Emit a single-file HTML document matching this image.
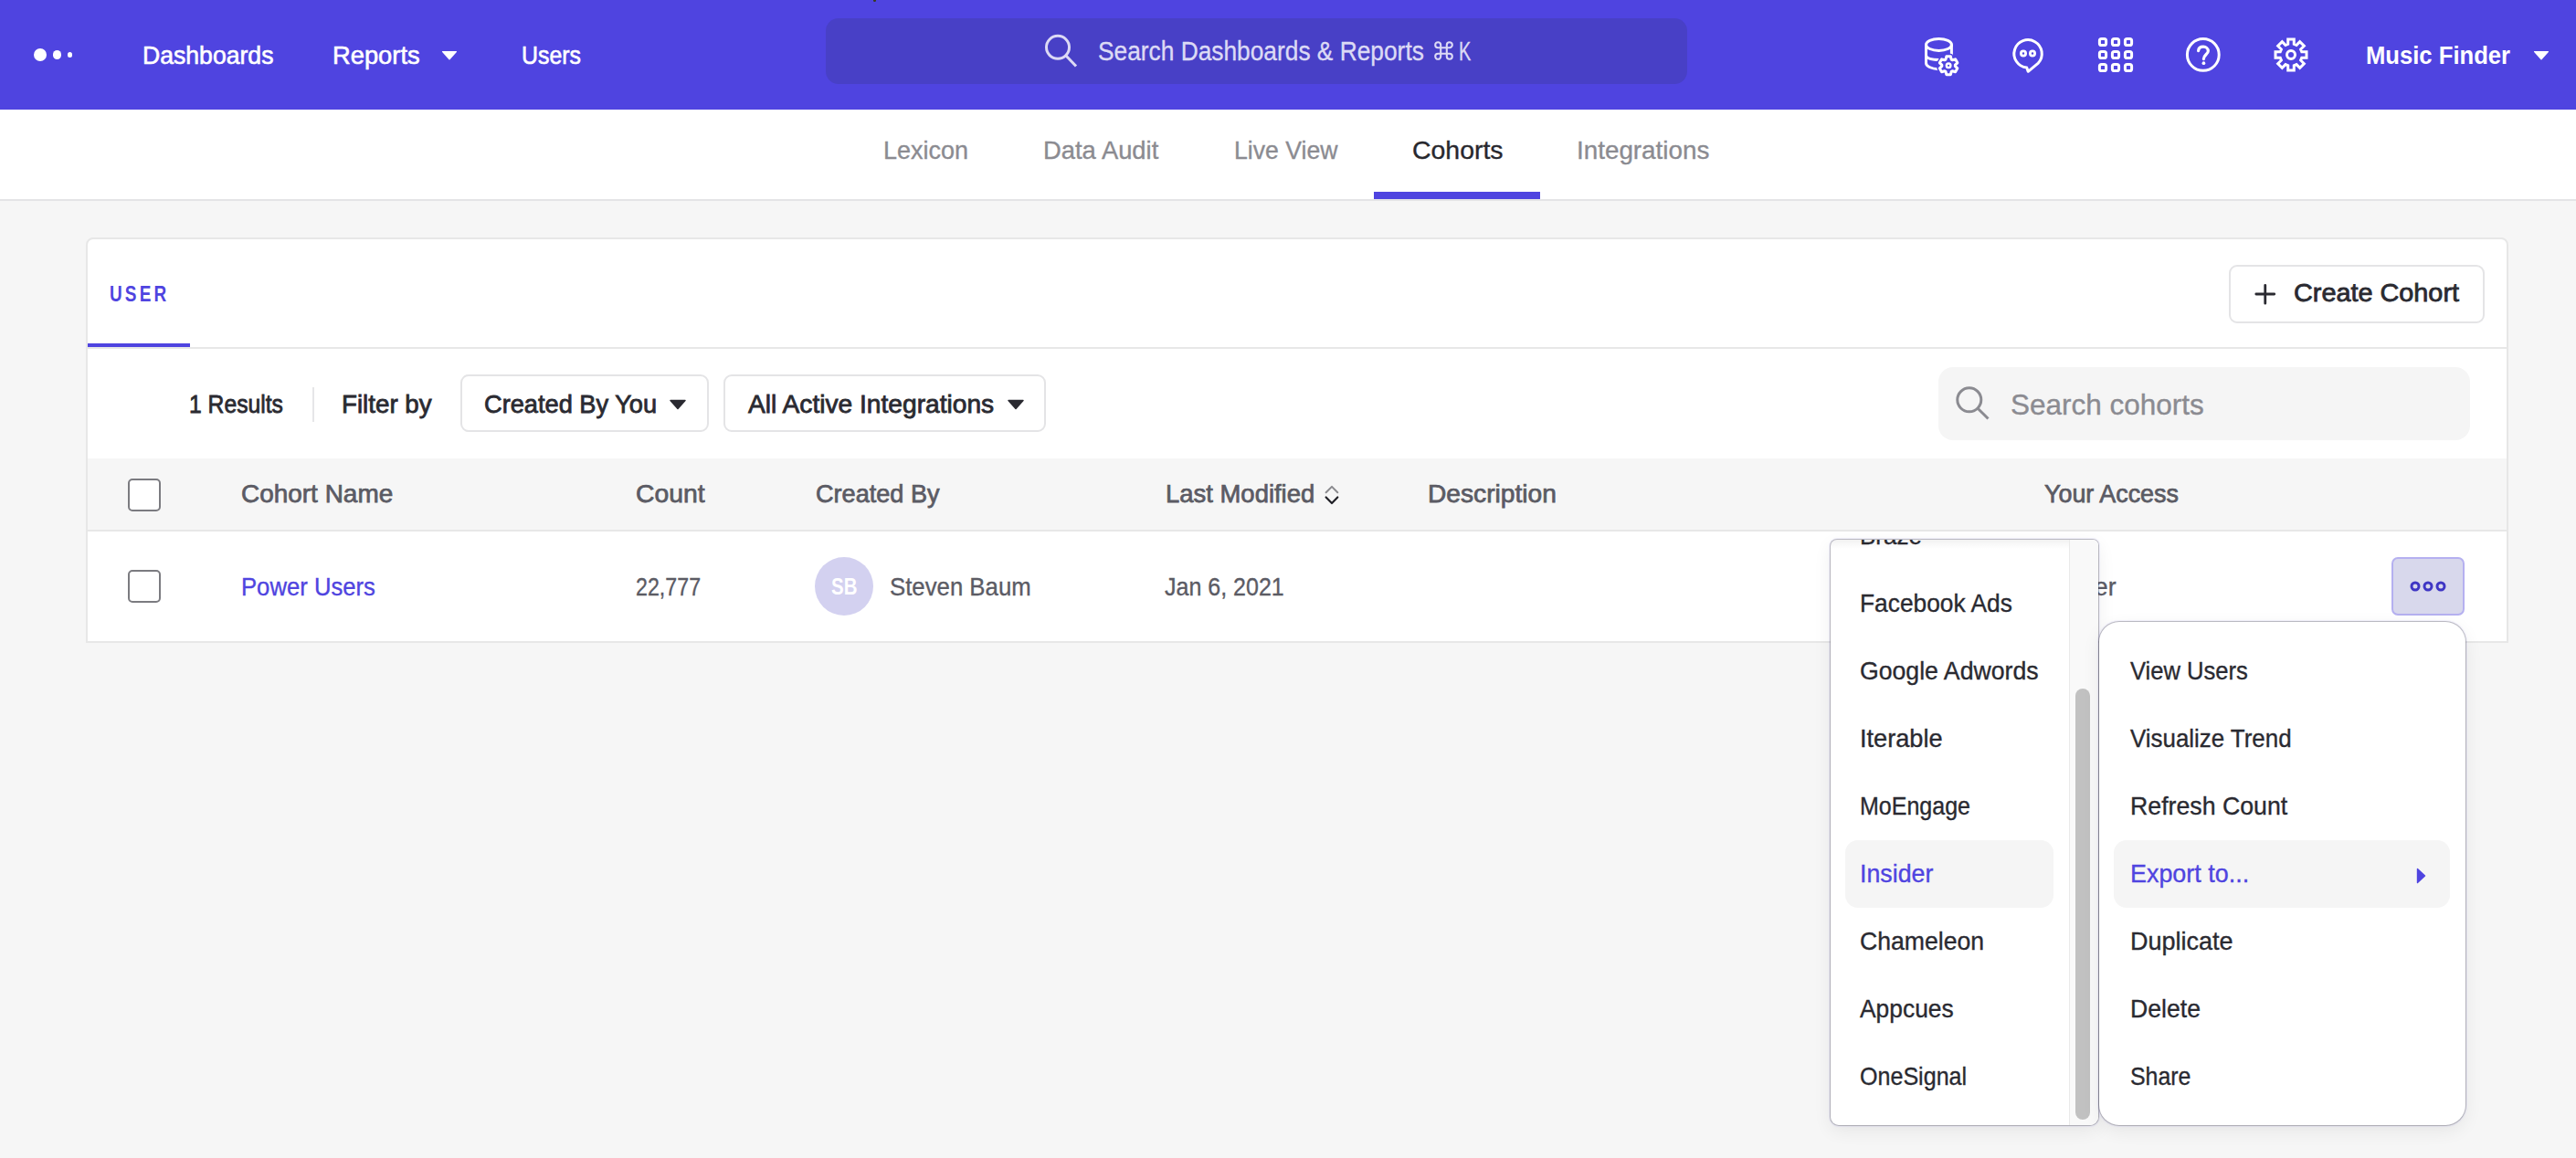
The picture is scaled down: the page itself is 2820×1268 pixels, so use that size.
<!DOCTYPE html>
<html><head><meta charset="utf-8"><style>
html,body{margin:0;padding:0;width:2820px;height:1268px;overflow:hidden;background:#f6f6f6;font-family:"Liberation Sans",sans-serif;}
.abs{position:absolute;box-sizing:content-box}
.t{position:absolute;white-space:nowrap;transform-origin:0 0}
.dot{position:absolute;border-radius:50%;background:#fff}
</style></head><body>
<div class="abs" style="left:0;top:0;width:2820px;height:120px;background:#4f44e0"></div>
<div class="abs" style="left:956px;top:0;width:3px;height:1.5px;border-radius:0 0 2px 2px;background:#3a3a20"></div>
<div class="dot" style="left:37.3px;top:53px;width:14px;height:14px"></div>
<div class="dot" style="left:57.8px;top:55.3px;width:9.4px;height:9.4px"></div>
<div class="dot" style="left:73.7px;top:57.4px;width:5.2px;height:5.2px"></div>
<div class="t" style="left:155.50px;top:47px;font-size:28px;line-height:28px;color:#ffffff;font-weight:400;-webkit-text-stroke:0.6px #ffffff;transform:scaleX(0.9503);">Dashboards</div>
<div class="t" style="left:364.40px;top:47px;font-size:28px;line-height:28px;color:#ffffff;font-weight:400;-webkit-text-stroke:0.6px #ffffff;transform:scaleX(0.9755);">Reports</div>
<svg class="abs" style="left:482px;top:54px" width="20" height="14"><path d="M2.6 2.6 L17.4 2.6 L10 10.8 Z" fill="#fff" stroke="#fff" stroke-width="1.3" stroke-linejoin="round"/></svg>
<div class="t" style="left:571.00px;top:47px;font-size:28px;line-height:28px;color:#ffffff;font-weight:400;-webkit-text-stroke:0.6px #ffffff;transform:scaleX(0.8889);">Users</div>
<div class="abs" style="left:904px;top:20px;width:943px;height:72px;border-radius:14px;background:#4840c6"></div>
<svg class="abs" style="left:1140px;top:34px" width="44" height="44"><circle cx="18" cy="17.8" r="12.5" fill="none" stroke="#dcdaf5" stroke-width="3"/><path d="M27 27 L38 38.5" stroke="#dcdaf5" stroke-width="3" stroke-linecap="butt"/></svg>
<div class="t" style="left:1201.80px;top:42px;font-size:29px;line-height:29px;color:#dcdaf5;font-weight:400;-webkit-text-stroke:0.35px #dcdaf5;transform:scaleX(0.9073);">Search Dashboards &amp; Reports</div>
<svg class="abs" style="left:1570px;top:45px" width="22" height="22"><path d="M7.2 4.2 A3 3 0 1 0 4.2 7.2 H16.8 A3 3 0 1 0 13.8 4.2 V16.8 A3 3 0 1 0 16.8 13.8 H4.2 A3 3 0 1 0 7.2 16.8 Z" fill="none" stroke="#dcdaf5" stroke-width="2.1" stroke-linejoin="round"/></svg>
<div class="t" style="left:1596.70px;top:42px;font-size:29px;line-height:29px;color:#dcdaf5;font-weight:400;-webkit-text-stroke:0.35px #dcdaf5;transform:scaleX(0.6865);">K</div>
<svg class="abs" style="left:2100px;top:36px" width="60" height="54">
<g fill="none" stroke="#fff" stroke-width="3">
<ellipse cx="22.5" cy="12.9" rx="14" ry="6.5"/>
<path d="M8.5 12.9 V33 C8.5 36.5 14 39.2 22 39.7"/>
<path d="M36.4 12.9 V27"/>
<path d="M8.5 24.5 C8.5 27.5 14 29.3 23 29.6"/>
</g>
<path d="M30.00 29.19 L30.82 25.86 L35.38 25.86 L36.20 29.19 L37.27 29.81 L40.57 28.85 L42.85 32.80 L40.37 35.18 L40.37 36.42 L42.85 38.80 L40.57 42.75 L37.27 41.79 L36.20 42.41 L35.38 45.74 L30.82 45.74 L30.00 42.41 L28.93 41.79 L25.63 42.75 L23.35 38.80 L25.83 36.42 L25.83 35.18 L23.35 32.80 L25.63 28.85 L28.93 29.81 Z" fill="#4f44e0" stroke="#4f44e0" stroke-width="6" stroke-linejoin="round"/>
<path d="M30.00 29.19 L30.82 25.86 L35.38 25.86 L36.20 29.19 L37.27 29.81 L40.57 28.85 L42.85 32.80 L40.37 35.18 L40.37 36.42 L42.85 38.80 L40.57 42.75 L37.27 41.79 L36.20 42.41 L35.38 45.74 L30.82 45.74 L30.00 42.41 L28.93 41.79 L25.63 42.75 L23.35 38.80 L25.83 36.42 L25.83 35.18 L23.35 32.80 L25.63 28.85 L28.93 29.81 Z" fill="#4f44e0" stroke="#fff" stroke-width="3" stroke-linejoin="round"/>
<circle cx="33.1" cy="35.8" r="2.3" fill="none" stroke="#fff" stroke-width="2.4"/>
</svg>
<svg class="abs" style="left:2195px;top:36px" width="50" height="50">
<path d="M36.3 33.1 A15.2 15.2 0 1 0 23.7 38 L25.2 42.3 Z" fill="none" stroke="#fff" stroke-width="3" stroke-linejoin="round"/>
<circle cx="20" cy="22.45" r="2.6" fill="none" stroke="#fff" stroke-width="2.8"/>
<circle cx="30" cy="22.45" r="2.6" fill="none" stroke="#fff" stroke-width="2.8"/>
</svg>
<svg class="abs" style="left:2290px;top:36px" width="50" height="50"><rect x="8.4" y="6.4" width="7.2" height="7.2" rx="2.2" fill="none" stroke="#fff" stroke-width="3"/><rect x="8.4" y="20.4" width="7.2" height="7.2" rx="2.2" fill="none" stroke="#fff" stroke-width="3"/><rect x="8.4" y="34.4" width="7.2" height="7.2" rx="2.2" fill="none" stroke="#fff" stroke-width="3"/><rect x="22.4" y="6.4" width="7.2" height="7.2" rx="2.2" fill="none" stroke="#fff" stroke-width="3"/><rect x="22.4" y="20.4" width="7.2" height="7.2" rx="2.2" fill="none" stroke="#fff" stroke-width="3"/><rect x="22.4" y="34.4" width="7.2" height="7.2" rx="2.2" fill="none" stroke="#fff" stroke-width="3"/><rect x="36.4" y="6.4" width="7.2" height="7.2" rx="2.2" fill="none" stroke="#fff" stroke-width="3"/><rect x="36.4" y="20.4" width="7.2" height="7.2" rx="2.2" fill="none" stroke="#fff" stroke-width="3"/><rect x="36.4" y="34.4" width="7.2" height="7.2" rx="2.2" fill="none" stroke="#fff" stroke-width="3"/></svg>
<svg class="abs" style="left:2385px;top:36px" width="54" height="50">
<circle cx="26.8" cy="23.9" r="17.4" fill="none" stroke="#fff" stroke-width="3"/>
<path d="M21.6 19.6 C21.8 16.8 24 15.2 27 15.2 C30.2 15.2 32.3 17.3 32.3 19.9 C32.3 23.2 27.4 24 27.4 28.6" fill="none" stroke="#fff" stroke-width="3.2" stroke-linecap="round"/>
<circle cx="27.4" cy="33.2" r="1.85" fill="#fff"/>
</svg>
<svg class="abs" style="left:2485px;top:36px" width="50" height="50">
<path d="M19.74 12.24 L19.72 7.01 L26.28 7.01 L26.26 12.24 L29.01 13.38 L32.69 9.67 L37.33 14.31 L33.62 17.99 L34.76 20.74 L39.99 20.72 L39.99 27.28 L34.76 27.26 L33.62 30.01 L37.33 33.69 L32.69 38.33 L29.01 34.62 L26.26 35.76 L26.28 40.99 L19.72 40.99 L19.74 35.76 L16.99 34.62 L13.31 38.33 L8.67 33.69 L12.38 30.01 L11.24 27.26 L6.01 27.28 L6.01 20.72 L11.24 20.74 L12.38 17.99 L8.67 14.31 L13.31 9.67 L16.99 13.38 Z" fill="none" stroke="#fff" stroke-width="3" stroke-linejoin="miter"/>
<circle cx="23" cy="24" r="4.5" fill="none" stroke="#fff" stroke-width="3"/>
</svg>
<div class="t" style="left:2589.50px;top:47px;font-size:28px;line-height:28px;color:#ffffff;font-weight:700;transform:scaleX(0.9152);">Music Finder</div>
<svg class="abs" style="left:2772px;top:54px" width="20" height="14"><path d="M2.6 2.6 L17.4 2.6 L10 10.8 Z" fill="#fff" stroke="#fff" stroke-width="1.3" stroke-linejoin="round"/></svg>
<div class="abs" style="left:0;top:120px;width:2820px;height:98px;background:#fff"></div>
<div class="abs" style="left:0;top:218px;width:2820px;height:2px;background:#e4e4e6"></div>
<div class="t" style="left:967.00px;top:151px;font-size:28px;line-height:28px;color:#8b8b91;font-weight:400;-webkit-text-stroke:0.35px #8b8b91;transform:scaleX(0.9637);">Lexicon</div>
<div class="t" style="left:1142.40px;top:151px;font-size:28px;line-height:28px;color:#8b8b91;font-weight:400;-webkit-text-stroke:0.35px #8b8b91;transform:scaleX(0.9772);">Data Audit</div>
<div class="t" style="left:1350.70px;top:151px;font-size:28px;line-height:28px;color:#8b8b91;font-weight:400;-webkit-text-stroke:0.35px #8b8b91;transform:scaleX(0.9515);">Live View</div>
<div class="t" style="left:1545.80px;top:151px;font-size:28px;line-height:28px;color:#28282e;font-weight:400;-webkit-text-stroke:0.35px #28282e;transform:scaleX(1.0153);">Cohorts</div>
<div class="t" style="left:1726.40px;top:151px;font-size:28px;line-height:28px;color:#8b8b91;font-weight:400;-webkit-text-stroke:0.35px #8b8b91;transform:scaleX(0.9933);">Integrations</div>
<div class="abs" style="left:1504px;top:210px;width:182px;height:8px;background:#4f44e0"></div>
<div class="abs" style="left:94px;top:260px;width:2648px;height:440px;border:2px solid #e7e7e7;border-radius:8px 8px 0 0;background:#fff"></div>
<div class="t" style="left:120.20px;top:310px;font-size:24px;line-height:24px;color:#4f44e0;font-weight:700;letter-spacing:4px;transform:scaleX(0.7898);">USER</div>
<div class="abs" style="left:96px;top:376px;width:112px;height:4px;background:#4f44e0"></div>
<div class="abs" style="left:96px;top:380px;width:2648px;height:2px;background:#e7e7e7"></div>
<div class="abs" style="left:2440px;top:290px;width:276px;height:60px;border:2px solid #e4e4e6;border-radius:9px;background:#fff"></div>
<svg class="abs" style="left:2466px;top:308px" width="28" height="28"><path d="M13.75 4.3 V24.2 M3.8 14 H23.7" stroke="#2a2a31" stroke-width="2.8" stroke-linecap="round"/></svg>
<div class="t" style="left:2511.40px;top:307px;font-size:28px;line-height:28px;color:#2a2a31;font-weight:400;-webkit-text-stroke:0.8px #2a2a31;transform:scaleX(1.0291);">Create Cohort</div>
<div class="t" style="left:207.20px;top:429px;font-size:28px;line-height:28px;color:#2a2a31;font-weight:400;-webkit-text-stroke:0.8px #2a2a31;transform:scaleX(0.8822);">1 Results</div>
<div class="abs" style="left:342px;top:424px;width:2px;height:38px;background:#e6e6e8"></div>
<div class="t" style="left:374.20px;top:429px;font-size:28px;line-height:28px;color:#2a2a31;font-weight:400;-webkit-text-stroke:0.8px #2a2a31;transform:scaleX(0.9907);">Filter by</div>
<div class="abs" style="left:504px;top:410px;width:268px;height:59px;border:2px solid #e4e4e6;border-radius:9px"></div>
<div class="t" style="left:530.30px;top:429px;font-size:28px;line-height:28px;color:#2a2a31;font-weight:400;-webkit-text-stroke:0.8px #2a2a31;transform:scaleX(0.9716);">Created By You</div>
<svg class="abs" style="left:731px;top:436px" width="22" height="14"><path d="M3 2.5 L19 2.5 L11 11.5 Z" fill="#2a2a31" stroke="#2a2a31" stroke-width="1.5" stroke-linejoin="round"/></svg>
<div class="abs" style="left:792px;top:410px;width:349px;height:59px;border:2px solid #e4e4e6;border-radius:9px"></div>
<div class="t" style="left:819.00px;top:429px;font-size:28px;line-height:28px;color:#2a2a31;font-weight:400;-webkit-text-stroke:0.8px #2a2a31;transform:scaleX(1.0054);">All Active Integrations</div>
<svg class="abs" style="left:1101px;top:436px" width="22" height="14"><path d="M3 2.5 L19 2.5 L11 11.5 Z" fill="#2a2a31" stroke="#2a2a31" stroke-width="1.5" stroke-linejoin="round"/></svg>
<div class="abs" style="left:2122px;top:402px;width:582px;height:80px;border-radius:16px;background:#f5f5f5"></div>
<svg class="abs" style="left:2138px;top:420px" width="44" height="44"><circle cx="17.8" cy="17.8" r="13" fill="none" stroke="#8b8b91" stroke-width="3"/><path d="M27.2 27.2 L38.5 38.5" stroke="#8b8b91" stroke-width="3"/></svg>
<div class="t" style="left:2200.70px;top:427px;font-size:32px;line-height:32px;color:#8b8b91;font-weight:400;-webkit-text-stroke:0.35px #8b8b91;transform:scaleX(0.9844);">Search cohorts</div>
<div class="abs" style="left:96px;top:502px;width:2648px;height:78px;background:#f6f6f6"></div>
<div class="abs" style="left:96px;top:580px;width:2648px;height:2px;background:#e7e7e7"></div>
<div class="abs" style="left:140px;top:524px;width:32px;height:32px;border:2px solid #7b7b80;border-radius:5px;background:#fff"></div>
<div class="t" style="left:264.20px;top:527px;font-size:28px;line-height:28px;color:#5b5b64;font-weight:400;-webkit-text-stroke:0.75px #5b5b64;transform:scaleX(0.9982);">Cohort Name</div>
<div class="t" style="left:696.40px;top:527px;font-size:28px;line-height:28px;color:#5b5b64;font-weight:400;-webkit-text-stroke:0.75px #5b5b64;transform:scaleX(1.0114);">Count</div>
<div class="t" style="left:893.20px;top:527px;font-size:28px;line-height:28px;color:#5b5b64;font-weight:400;-webkit-text-stroke:0.75px #5b5b64;transform:scaleX(0.9677);">Created By</div>
<div class="t" style="left:1275.80px;top:527px;font-size:28px;line-height:28px;color:#5b5b64;font-weight:400;-webkit-text-stroke:0.75px #5b5b64;transform:scaleX(0.9802);">Last Modified</div>
<svg class="abs" style="left:1448px;top:528px" width="20" height="26"><path d="M3.6 11.2 L10 4.9 L16.3 11.2" fill="none" stroke="#8a8a8e" stroke-width="2" stroke-linecap="round" stroke-linejoin="round"/><path d="M3.6 16.5 L10 23 L16.3 16.5" fill="none" stroke="#202026" stroke-width="2.2" stroke-linecap="round" stroke-linejoin="round"/></svg>
<div class="t" style="left:1563.00px;top:527px;font-size:28px;line-height:28px;color:#5b5b64;font-weight:400;-webkit-text-stroke:0.75px #5b5b64;transform:scaleX(1.0057);">Description</div>
<div class="t" style="left:2238.40px;top:527px;font-size:28px;line-height:28px;color:#5b5b64;font-weight:400;-webkit-text-stroke:0.75px #5b5b64;transform:scaleX(0.9601);">Your Access</div>
<div class="abs" style="left:140px;top:624px;width:32px;height:32px;border:2px solid #7b7b80;border-radius:5px;background:#fff"></div>
<div class="t" style="left:264.20px;top:629px;font-size:28px;line-height:28px;color:#4f44e0;font-weight:400;-webkit-text-stroke:0.35px #4f44e0;transform:scaleX(0.9167);">Power Users</div>
<div class="t" style="left:696.40px;top:629px;font-size:28px;line-height:28px;color:#5b5b64;font-weight:400;-webkit-text-stroke:0.35px #5b5b64;transform:scaleX(0.8304);">22,777</div>
<div class="abs" style="left:892px;top:610px;width:64px;height:64px;border-radius:50%;background:#d3d1f0"></div>
<div class="t" style="left:910.30px;top:629px;font-size:26px;line-height:26px;color:#ffffff;font-weight:700;transform:scaleX(0.7862);">SB</div>
<div class="t" style="left:973.60px;top:629px;font-size:28px;line-height:28px;color:#5b5b64;font-weight:400;-webkit-text-stroke:0.35px #5b5b64;transform:scaleX(0.9201);">Steven Baum</div>
<div class="t" style="left:1275.00px;top:629px;font-size:28px;line-height:28px;color:#5b5b64;font-weight:400;-webkit-text-stroke:0.35px #5b5b64;transform:scaleX(0.8936);">Jan 6, 2021</div>
<div class="t" style="left:2238.40px;top:629px;font-size:28px;line-height:28px;color:#5b5b64;font-weight:400;-webkit-text-stroke:0.35px #5b5b64;transform:scaleX(0.9527);">Owner</div>
<div class="abs" style="left:2618px;top:610px;width:76px;height:60px;border:2px solid #b5b0f0;border-radius:7px;background:#d8d8ec"></div>
<svg class="abs" style="left:2630px;top:630px" width="56" height="24"><g fill="none" stroke="#3f36c4" stroke-width="3"><circle cx="14" cy="12" r="4"/><circle cx="28" cy="12" r="4"/><circle cx="42" cy="12" r="4"/></g></svg>
<div class="abs" style="left:2003.5px;top:591px;width:293px;height:641px;border-radius:7px 6px 9px 9px;background:#fff;box-shadow:0 0 0 1px rgba(0,0,0,0.22), 0 0 1px 2px rgba(140,130,240,0.10), 0 6px 20px rgba(0,0,0,0.07);overflow:hidden"><div class="abs" style="left:261px;top:0;width:32px;height:641px;background:#f9f9f9;border-left:1px solid #eaeaea"></div><div class="abs" style="left:268.5px;top:163px;width:16px;height:472px;border-radius:8px;background:#c1c1c1"></div><div class="abs" style="left:16.5px;top:329px;width:228px;height:74px;border-radius:14px;background:#f5f5f5"></div><div class="t" style="left:32.90px;top:-18px;font-size:28px;line-height:28px;color:#2a2a31;font-weight:400;-webkit-text-stroke:0.35px #2a2a31;transform:scaleX(0.9300);">Braze</div><div class="t" style="left:32.90px;top:56px;font-size:28px;line-height:28px;color:#2a2a31;font-weight:400;-webkit-text-stroke:0.35px #2a2a31;transform:scaleX(0.9403);">Facebook Ads</div><div class="t" style="left:32.90px;top:130px;font-size:28px;line-height:28px;color:#2a2a31;font-weight:400;-webkit-text-stroke:0.35px #2a2a31;transform:scaleX(0.9518);">Google Adwords</div><div class="t" style="left:32.90px;top:204px;font-size:28px;line-height:28px;color:#2a2a31;font-weight:400;-webkit-text-stroke:0.35px #2a2a31;transform:scaleX(0.9703);">Iterable</div><div class="t" style="left:32.90px;top:278px;font-size:28px;line-height:28px;color:#2a2a31;font-weight:400;-webkit-text-stroke:0.35px #2a2a31;transform:scaleX(0.8931);">MoEngage</div><div class="t" style="left:32.90px;top:352px;font-size:28px;line-height:28px;color:#4f44e0;font-weight:400;-webkit-text-stroke:0.35px #4f44e0;transform:scaleX(0.9560);">Insider</div><div class="t" style="left:32.90px;top:426px;font-size:28px;line-height:28px;color:#2a2a31;font-weight:400;-webkit-text-stroke:0.35px #2a2a31;transform:scaleX(0.9508);">Chameleon</div><div class="t" style="left:32.90px;top:500px;font-size:28px;line-height:28px;color:#2a2a31;font-weight:400;-webkit-text-stroke:0.35px #2a2a31;transform:scaleX(0.9422);">Appcues</div><div class="t" style="left:32.90px;top:574px;font-size:28px;line-height:28px;color:#2a2a31;font-weight:400;-webkit-text-stroke:0.35px #2a2a31;transform:scaleX(0.8956);">OneSignal</div><div class="abs" style="left:0;top:0;width:261px;height:10px;background:linear-gradient(rgba(0,0,0,0.05),rgba(0,0,0,0))"></div></div>
<div class="abs" style="left:2297.5px;top:681px;width:401px;height:551px;border-radius:22px;background:#fff;box-shadow:0 0 0 1px rgba(0,0,0,0.22), 0 0 1px 2px rgba(140,130,240,0.10), 0 6px 20px rgba(0,0,0,0.07);overflow:hidden"><div class="abs" style="left:16.8px;top:239px;width:368px;height:74px;border-radius:14px;background:#f5f5f5"></div><div class="t" style="left:34.40px;top:40px;font-size:28px;line-height:28px;color:#2a2a31;font-weight:400;-webkit-text-stroke:0.35px #2a2a31;transform:scaleX(0.9127);">View Users</div><div class="t" style="left:34.40px;top:114px;font-size:28px;line-height:28px;color:#2a2a31;font-weight:400;-webkit-text-stroke:0.35px #2a2a31;transform:scaleX(0.9247);">Visualize Trend</div><div class="t" style="left:34.40px;top:188px;font-size:28px;line-height:28px;color:#2a2a31;font-weight:400;-webkit-text-stroke:0.35px #2a2a31;transform:scaleX(0.9535);">Refresh Count</div><div class="t" style="left:34.40px;top:262px;font-size:28px;line-height:28px;color:#4f44e0;font-weight:400;-webkit-text-stroke:0.35px #4f44e0;transform:scaleX(0.9610);">Export to...</div><div class="t" style="left:34.40px;top:336px;font-size:28px;line-height:28px;color:#2a2a31;font-weight:400;-webkit-text-stroke:0.35px #2a2a31;transform:scaleX(0.9645);">Duplicate</div><div class="t" style="left:34.40px;top:410px;font-size:28px;line-height:28px;color:#2a2a31;font-weight:400;-webkit-text-stroke:0.35px #2a2a31;transform:scaleX(0.9506);">Delete</div><div class="t" style="left:34.40px;top:484px;font-size:28px;line-height:28px;color:#2a2a31;font-weight:400;-webkit-text-stroke:0.35px #2a2a31;transform:scaleX(0.8883);">Share</div><svg class="abs" style="left:346px;top:268px" width="14" height="20"><path d="M2.5 2.5 L10.5 10 L2.5 17.5 Z" fill="#4f44e0" stroke="#4f44e0" stroke-width="1.4" stroke-linejoin="round"/></svg></div>
</body></html>
